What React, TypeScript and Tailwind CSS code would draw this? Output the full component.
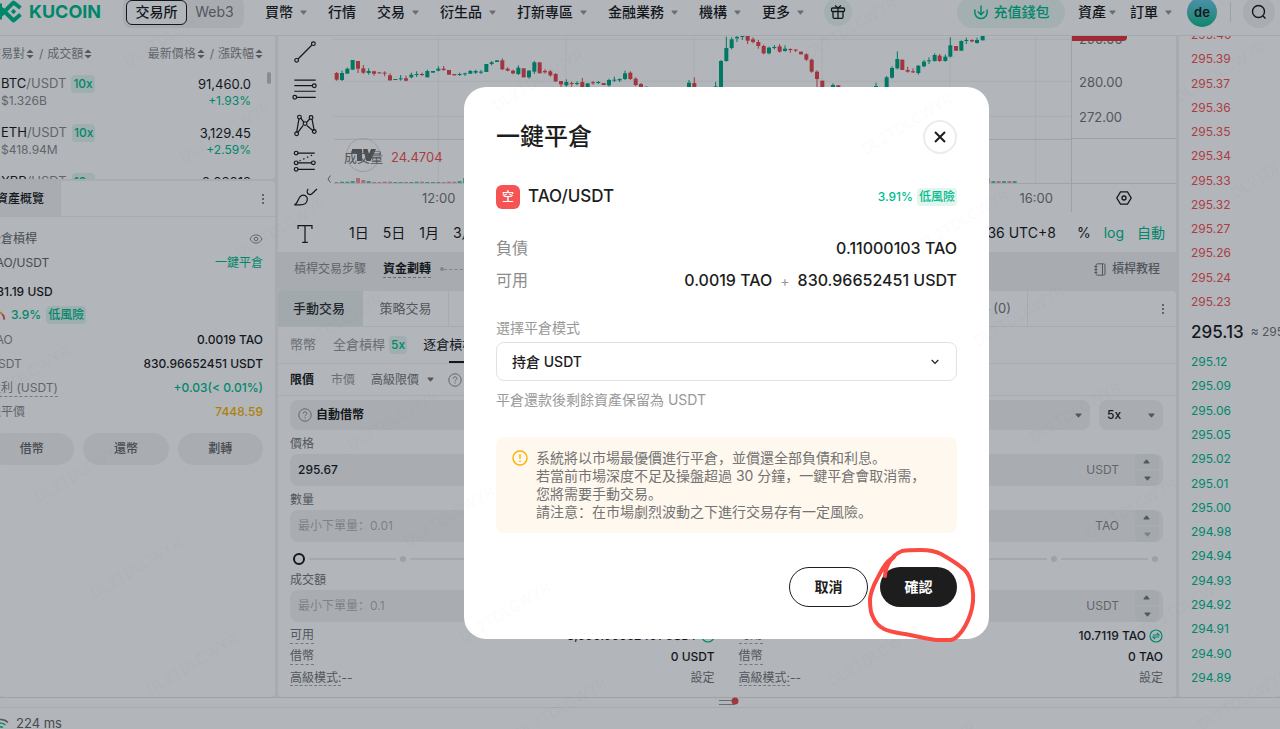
import React from "react";

type Candle = [number, number, number, 0 | 1, number?, number?];

// x, body top, body bottom, rising flag, wick top, wick bottom
const candles: Candle[] = [
  [1010, 219, 239, 0, 216, 242], [1026, 219, 240, 1, 212, 243], [1042, 206, 221, 1, 203, 221], [1058, 180, 209, 1],
  [1074, 183, 206, 0, 183, 219], [1090, 205, 218, 0, 195, 222], [1106, 213, 219, 1, 205, 224], [1122, 214, 221, 0, 212, 227],
  [1138, 217, 220, 0], [1154, 218, 221, 0, 214, 229], [1170, 226, 241, 0, 220, 242], [1186, 237, 240, 1],
  [1202, 235, 238, 1, 225, 242], [1218, 235, 242, 0, 227, 244], [1234, 224, 232, 1, 218, 235], [1250, 222, 225, 1, 214, 231],
  [1266, 222, 225, 0, 218, 228], [1282, 213, 232, 1, 209, 232], [1299, 213, 218, 1], [1315, 206, 212, 1, 199, 214],
  [1331, 206, 210, 0, 198, 212], [1347, 210, 224, 0], [1363, 222, 226, 0], [1379, 222, 225, 1, 218, 228],
  [1395, 220, 223, 1, 218, 228], [1411, 213, 221, 1, 210, 222], [1427, 213, 218, 1, 209, 222], [1443, 215, 218, 1, 210, 222],
  [1459, 192, 216, 1], [1475, 187, 192, 1, 183, 196], [1491, 181, 186, 1], [1507, 181, 208, 0, 175, 210],
  [1523, 206, 212, 0, 202, 214], [1539, 212, 220, 0, 209, 223], [1555, 203, 222, 1, 196, 225], [1571, 205, 232, 0],
  [1587, 212, 232, 1, 210, 236], [1603, 187, 215, 1, 183, 222], [1619, 187, 220, 0], [1635, 213, 217, 0, 208, 221],
  [1651, 214, 226, 0, 210, 230], [1667, 222, 244, 0, 219, 246], [1683, 243, 253, 0, 243, 262], [1699, 246, 256, 1, 238, 260],
  [1715, 249, 252, 0, 245, 260], [1731, 249, 252, 1, 244, 256], [1747, 246, 262, 0, 234, 264], [1763, 250, 262, 1],
  [1779, 247, 250, 0, 243, 254], [1795, 246, 249, 1, 243, 252], [1811, 249, 255, 0], [1827, 240, 256, 1, 236, 260],
  [1843, 239, 242, 1, 230, 246], [1859, 237, 241, 1, 235, 246], [1875, 220, 237, 1, 212, 240], [1891, 218, 237, 0, 214, 240],
  [1907, 236, 255, 0, 232, 258], [1923, 252, 268, 0, 249, 270], [1939, 260, 272, 1], [2067, 248, 265, 1, 240, 265],
  [2083, 249, 265, 0, 232, 265], [2147, 259, 270, 1, 245, 270], [2163, 183, 262, 1, 180, 262], [2179, 144, 183, 1, 110, 185],
  [2195, 118, 144, 1, 112, 148], [2211, 111, 115, 1, 108, 126], [2227, 108, 111, 1, 108, 120], [2243, 108, 122, 0, 108, 132],
  [2259, 118, 126, 0, 112, 130], [2275, 126, 138, 0, 120, 146], [2291, 138, 160, 0, 134, 163], [2307, 143, 160, 1, 140, 163],
  [2323, 141, 144, 1, 135, 148], [2339, 139, 155, 0, 132, 158], [2355, 146, 153, 1, 136, 155], [2371, 147, 150, 0, 145, 158],
  [2387, 149, 152, 0, 147, 156], [2403, 155, 163, 0], [2419, 163, 179, 0, 160, 183], [2435, 179, 215, 0, 176, 218],
  [2451, 215, 237, 0, 211, 262], [2467, 242, 264, 0], [2499, 255, 264, 1, 250, 264], [2515, 256, 264, 0],
  [2628, 258, 264, 1, 248, 264], [2660, 232, 264, 1, 228, 264], [2676, 204, 233, 1, 199, 236], [2692, 177, 205, 1, 154, 208],
  [2707, 179, 210, 0], [2723, 210, 215, 0, 200, 218], [2739, 214, 217, 0, 205, 219], [2755, 197, 219, 1, 195, 224],
  [2772, 185, 199, 1, 180, 202], [2787, 181, 184, 1, 172, 192], [2804, 165, 183, 1, 160, 185], [2819, 167, 183, 0, 162, 186],
  [2836, 170, 183, 1, 163, 185], [2851, 136, 170, 1, 112, 172], [2868, 138, 152, 0], [2884, 123, 152, 1, 121, 153],
  [2899, 120, 123, 1, 113, 132], [2916, 120, 124, 0, 118, 127], [2931, 120, 129, 1, 113, 131], [2948, 108, 121, 1],
];

const volumeHeights = [3, 4, 4, 6, 15, 9, 6, 3, 3, 4, 4, 3, 3, 3, 3, 4, 4, 3, 3, 3];

const asks = ["295.40", "295.39", "295.37", "295.36", "295.35", "295.34", "295.33", "295.32", "295.27", "295.26", "295.24", "295.23"];
const bids = ["295.12", "295.09", "295.06", "295.05", "295.02", "295.01", "295.00", "294.98", "294.94", "294.93", "294.92", "294.91", "294.90", "294.89"];

const Caret = ({ className = "text-[#999]" }: { className?: string }) => (
  <svg viewBox="0 0 8 6" className={`h-[5px] w-[7px] shrink-0 ${className}`} aria-hidden="true">
    <path d="M1.2.5h5.6c.7 0 1 .7.6 1.2L4.6 5a.8.8 0 0 1-1.2 0L.6 1.700C.2 1.200.5.5 1.200.5Z" fill="currentColor" />
  </svg>
);

const Sort = () => (
  <svg viewBox="0 0 8 10" className="mx-px h-[10px] w-2" fill="#7a7a7a" aria-hidden="true">
    <path d="M4 .5 7.600 4H.4zM4 9.500.4 6h7.200z" />
  </svg>
);

const Help = () => (
  <svg viewBox="0 0 14 14" className="h-[14px] w-[14px] shrink-0" fill="none" stroke="#8c8c8c" aria-hidden="true">
    <circle cx="7" cy="7" r="6.200" />
    <path d="M5.200 5.600c0-2.400 3.600-2.300 3.600-.1 0 1.300-1.800 1.400-1.800 2.800M7 9.400v1.200" />
  </svg>
);

const Dots = () => (
  <button aria-label="更多選項" className="flex h-6 w-2 flex-col items-center justify-center gap-[2px]">
    <span className="h-[2px] w-[2px] bg-[#8c8c8c]" />
    <span className="h-[2px] w-[2px] bg-[#8c8c8c]" />
    <span className="h-[2px] w-[2px] bg-[#8c8c8c]" />
  </button>
);

const NavItem = ({ label, caret = true }: { label: string; caret?: boolean }) => (
  <a href="#" className="flex shrink-0 items-center gap-[7px]">
    {label}
    {caret && <Caret />}
  </a>
);

const Header = () => (
  <header className="h-9 overflow-hidden border-b border-[#ececec] bg-white">
    <div className="-mt-3 flex h-12 items-center text-sm font-medium text-[#1d1d1d]">
      <a href="#" className="flex items-center gap-[7px] text-[#01bc8d]" aria-label="KuCoin">
        <svg viewBox="0 0 22 24" className="h-6 w-[22px]" fill="none" stroke="currentColor" strokeWidth="4" strokeLinejoin="round" aria-hidden="true">
          <path d="M0 3.500v16" />
          <path d="M20.500 8 13.500 2.500 4.500 11.500l9 9 7-6" />
          <path d="M1 8.500 4.500 11.500 1 15" />
          <path d="m13.500 8.800 2.700 2.700-2.700 2.700-2.700-2.700z" fill="currentColor" stroke="none" />
        </svg>
        <span className="w-[75px] text-lg font-bold">KUCOIN</span>
      </a>
      <div className="ml-[19px] flex h-[31px] items-center rounded-lg bg-[#f3f3f3] pl-[3px]">
        <button className="h-[25px] w-[61px] rounded-md border border-[#1d1d1d] bg-white">交易所</button>
        <button className="w-[55px] font-normal text-[#777]">Web3</button>
        <span className="w-[2px]" />
      </div>
      <nav className="ml-[21px] flex items-center gap-[21px]">
        <NavItem label="買幣" />
        <NavItem label="行情" caret={false} />
        <NavItem label="交易" />
        <NavItem label="衍生品" />
        <NavItem label="打新專區" />
        <NavItem label="金融業務" />
        <NavItem label="機構" />
        <NavItem label="更多" />
      </nav>
      <button aria-label="獎勵" className="ml-5 flex h-7 w-7 shrink-0 items-center justify-center rounded-full bg-[#eaf5f1]">
        <svg viewBox="0 0 16 16" className="h-4 w-4" fill="none" stroke="#1d1d1d" strokeWidth="1.300" aria-hidden="true">
          <rect x="1.500" y="4" width="13" height="3.500" rx="1" />
          <path d="M3 7.500V13q0 1.300 1.300 1.300h7.400Q13 14.300 13 13V7.500M8 4v10.300M5 1.500 8 4l3-2.500" />
        </svg>
      </button>
      <div className="ml-auto flex items-center">
        <button className="flex h-[31px] w-[108px] items-center justify-center gap-[5px] rounded-full bg-[#eaf5f1] text-[#01bc8d]">
          <svg viewBox="0 0 16 16" className="h-4 w-4" fill="none" stroke="currentColor" strokeWidth="1.400" aria-hidden="true">
            <path d="M8 1.500v9M4.700 7.500 8 10.700l3.300-3.200M2 5.500c-2.500 12 14.500 12 12 0" />
          </svg>
          充值錢包
        </button>
        <a href="#" className="ml-[13px] flex items-center gap-[3px]">資產<Caret /></a>
        <a href="#" className="ml-[14px] flex items-center gap-[7px]">訂單<Caret /></a>
        <button className="ml-[15px] h-[30px] w-[30px] rounded-full bg-linear-to-b from-[#6fc8ee] to-[#01bc8d] text-[13px] font-semibold leading-none">de</button>
        <span className="ml-[13px] h-5 w-px bg-[#e2e2e2]" />
        <button aria-label="搜尋" className="ml-3 mr-[5px] flex h-8 w-8 items-center justify-center rounded-full bg-[#f3f3f3]">
          <svg viewBox="0 0 16 16" className="h-4 w-4" fill="none" stroke="#1d1d1d" strokeWidth="1.400" aria-hidden="true">
            <circle cx="7.500" cy="7.500" r="6" />
            <path d="m12 12 2.500 2.500" />
          </svg>
        </button>
      </div>
    </div>
  </header>
);

const pairs = [
  ["BTC", "$1.326B", "91,460.0", "+1.93%"],
  ["ETH", "$418.94M", "3,129.45", "+2.59%"],
  ["XRP", "$210.35M", "2.03018", "+1.12%"],
];

const Badge = ({ children }: { children: React.ReactNode }) => (
  <span className="rounded-sm bg-[#e4f5ef] px-[2px] text-xs font-medium leading-[18px] text-[#01bc8d]">{children}</span>
);

const PairList = () => (
  <section className="relative h-[143px] overflow-hidden rounded-b bg-white">
    <div className="-ml-3 flex h-8 items-center justify-between pl-px pr-[11px] pt-1 text-xs text-[#8c8c8c]">
      <span className="flex items-center">交易對<Sort /><span className="mx-1">/</span>成交額<Sort /></span>
      <span className="flex items-center">最新價格<Sort /><span className="mx-1">/</span>漲跌幅<Sort /></span>
    </div>
    {pairs.map(([coin, vol, price, change]) => (
      <div key={coin} className="flex h-[49px] justify-between pl-px pr-6 pt-[7px]">
        <div>
          <div className="flex h-[18px] items-center text-[13px] text-[#8c8c8c]">
            <span className="mr-[5px]"><span className="text-[#1d1d1d]">{coin}</span>/USDT</span>
            <Badge>10x</Badge>
          </div>
          <div className="text-xs text-[#8c8c8c]">{vol}</div>
        </div>
        <div className="text-right">
          <div className="h-[18px] text-[13px] leading-[18px] text-[#1d1d1d]">{price}</div>
          <div className="text-xs text-[#01bc8d]">{change}</div>
        </div>
      </div>
    ))}
    <span className="absolute right-1 top-9 h-3 w-1 rounded-full bg-[#c4c4c4]" />
  </section>
);

const AssetRow = ({ label, value, tone = "text-[#1d1d1d]", dashed = false }: { label: string; value: string; tone?: string; dashed?: boolean }) => (
  <div className="flex h-6 items-center justify-between">
    <span className={dashed ? "border-b border-dashed border-[#a8a8a8] text-[#8c8c8c]" : "text-[#8c8c8c]"}>{label}</span>
    <span className={`font-medium ${tone}`}>{value}</span>
  </div>
);

const Assets = () => (
  <section className="flex-1 overflow-hidden rounded bg-white text-xs">
    <div className="flex h-9 items-center justify-between border-b border-[#f0f0f0] pr-2">
      <button className="-ml-4 h-full w-[77px] border-r border-[#ececec] bg-[#f3f3f3] pl-3 pr-4 font-medium text-[#1d1d1d]">
        <span className="whitespace-nowrap">資產概覽</span>
      </button>
      <Dots />
    </div>
    <div className="-ml-3 pl-px pr-3 pt-[10px]">
      <div className="flex h-6 items-center justify-between text-[#666]">
        全倉槓桿
        <svg viewBox="0 0 14 10" className="h-[10px] w-[14px]" fill="none" stroke="#8c8c8c" aria-hidden="true">
          <path d="M1 5c2.500-5.500 9.500-5.500 12 0-2.500 5.500-9.500 5.500-12 0Z" />
          <circle cx="7" cy="5" r="1.800" />
        </svg>
      </div>
      <div className="flex h-6 items-center justify-between text-[#666]">
        TAO/USDT
        <button className="text-[#01bc8d]">一鍵平倉</button>
      </div>
      <div className="mt-[5px] h-6 font-medium leading-6 text-[#1d1d1d]">831.19 USD</div>
      <div className="flex h-[21px] items-center gap-[5px] font-medium text-[#01bc8d]">
        <svg viewBox="0 0 18 12" className="h-3 w-[17px]" fill="none" strokeWidth="2" aria-hidden="true">
          <path d="M2 10A7 7 0 0 1 9 3" stroke="#01bc8d" />
          <path d="M9 3a6 6 0 0 1 5 2" stroke="#f8b200" />
          <path d="M14 5a7 7 0 0 1 2 6" stroke="#f65454" />
        </svg>
        3.9%
        <Badge>低風險</Badge>
      </div>
      <div className="mt-[3px]">
        <AssetRow label="TAO" value="0.0019 TAO" />
        <AssetRow label="USDT" value="830.96652451 USDT" />
        <AssetRow label="盈利 (USDT)" value="+0.03(< 0.01%)" tone="text-[#01bc8d]" dashed />
        <AssetRow label="強平價" value="7448.59" tone="text-[#f8b200]" />
      </div>
      <div className="mt-[9px] grid grid-cols-3 gap-[9px] font-medium text-[#666]">
        {["借幣", "還幣", "劃轉"].map((t) => (
          <button key={t} className="h-8 rounded-full bg-[#f3f3f3]">{t}</button>
        ))}
      </div>
    </div>
  </section>
);

const ChartTools = () => (
  <div className="-mt-[2px] flex w-[53px] flex-col items-center">
    {[
      <g key="a"><path d="m6.500 21.500 15-15" /><circle cx="5" cy="23" r="2" /><circle cx="23" cy="5" r="2" /></g>,
      <g key="b"><path d="M2.500 5.500h23M2.500 11.500h19M2.500 17.500h23M5 24h20.500" /><circle cx="24" cy="11.500" r="2" /><circle cx="3" cy="24" r="2" /></g>,
      <g key="c"><path d="M5 22 7.500 7.500M9.500 6.500l3.500 5M15.500 11.500l4-4.500M21.500 7.500l2.500 12.500M6 22.500l6-8M16 14.500l7 6" /><circle cx="8" cy="5.500" r="2" /><circle cx="20.500" cy="6" r="2" /><circle cx="14" cy="12.500" r="2" /><circle cx="5" cy="23.500" r="2" /><circle cx="24" cy="21" r="2" /></g>,
      <g key="d"><path d="M6 5.500h18.500M6 16h15.500M6 23h18.500" /><path d="m8 14 16-7.500" strokeDasharray="1.500 3" /><circle cx="4.500" cy="5.500" r="2" /><circle cx="4.500" cy="16" r="2" /><circle cx="23" cy="16" r="2" /><circle cx="4.500" cy="23" r="2" /></g>,
      <g key="e"><path d="M2.500 22.500c4-1 3.500-7.500 7.500-10 3-1.500 7 .5 6.500 4.500-.5 4-4 5.500-7.500 5.500ZM17.500 5.500c-2 1.500-1.500 6 2 6 2 0 4-3.500 7.500-6" /></g>,
      <g key="f"><path d="M6.500 8.500V5h15v3.500M14 5v18M11 23h6" /></g>,
    ].map((icon, i) => (
      <button key={i} aria-label="繪圖工具" className="flex w-9 flex-1 items-center justify-center">
        <svg viewBox="0 0 28 28" className="h-[26px] w-[26px]" fill="none" stroke="#1d1d1d" strokeWidth="1.300">{icon}</svg>
      </button>
    ))}
  </div>
);

const Plot = () => (
  <svg viewBox="990 108 2223 444" preserveAspectRatio="none" className="block h-full w-full" aria-label="K線圖">
    {[1315, 1698, 2082, 2466, 2850, 3107].map((x) => <path key={x} d={`M${x} 108V552`} stroke="#f3f3f3" strokeWidth="3" />)}
    {[118, 244, 349].map((y) => <path key={y} d={`M1002 ${y}H3213`} stroke="#f3f3f3" strokeWidth="3" />)}
    <path d="M1002 418H3213" stroke="#e2e2e2" strokeWidth="3" />
    {candles.map(([x, top, bottom, up, high = top, low = bottom]) => (
      <g key={x} fill={up ? "#01a781" : "#e5484d"}>
        <rect x={x - 6} y={top} width="12" height={bottom - top} />
        <rect x={x - 1.5} y={high} width="3" height={low - high} />
      </g>
    ))}
    {candles.map(([x, , , up], i) => {
      const h = x > 2770 ? 6 : volumeHeights[i % 20];
      return x < 2930 && <rect key={x} x={x - 6} y={549 - h} width="12" height={h} fill={up ? "#5cc9ab" : "#f39a9c"} />;
    })}
    {[2963, 2980, 2996, 3012, 3028, 3044].map((x, i) => (
      <rect key={x} x={x - 6} y={i === 0 ? 535 : 543} width="12" height={i === 0 ? 14 : 6} fill={i % 2 ? "#5cc9ab" : "#f39a9c"} />
    ))}
    <path d="M1002 551H3213" stroke="#e2e2e2" strokeWidth="3" />
  </svg>
);

const Chart = () => (
  <section className="flex h-[216px] overflow-hidden bg-white">
    <ChartTools />
    <div className="-ml-px flex min-w-0 flex-1 flex-col">
      <div className="flex h-[148px]">
        <div className="relative min-w-0 flex-1">
          <Plot />
          <svg viewBox="0 0 36 36" className="absolute left-[15px] top-[101px] h-9 w-9" aria-hidden="true">
            <circle cx="18" cy="18" r="16.500" fill="none" stroke="#dcdcdc" />
            <path d="M7 12h10v12h-5v-7H7zM18 12h4.500l1.500 5 2-5h5l-5.500 12h-4z" fill="#6a6a6a" />
          </svg>
          <div className="absolute left-[14px] top-[111px] flex gap-2 text-[13px] leading-5 text-[#777]">
            成交量<span className="text-[#f65454]">24.4704</span>
          </div>
          <svg viewBox="0 0 4 8" className="absolute -left-[3px] top-[139px] h-2 w-1" fill="none" stroke="#777" aria-hidden="true"><path d="M3.500.5 1 4l2.500 3.500" /></svg>
        </div>
        <div className="relative w-[105px] border-b border-l border-[#e2e2e2] pl-[7px] text-[13px] leading-4 text-[#777]">
          <div className="-mt-[5px] h-[43px]">290.00</div>
          <div className="h-[35px]">280.00</div>
          <div className="h-[29px]">272.00</div>
          <div className="-ml-[7px] border-t border-[#e2e2e2]" />
          <span className="absolute left-0 top-0 h-[5px] w-[55px] rounded-br-sm bg-[#e5383f]" />
        </div>
      </div>
      <div className="flex h-7 text-[13px] leading-[29px] text-[#777]">
        <div className="flex flex-1 justify-between pl-[92px] pr-[18px]">
          <span>12:00</span>
          <span>16:00</span>
        </div>
        <div className="flex w-[105px] items-center justify-center border-l border-[#e2e2e2]">
          <svg viewBox="0 0 16 16" className="h-4 w-4" fill="none" stroke="#1d1d1d" strokeWidth="1.300" aria-label="設定">
            <path d="M4.500 1.800h7L15.200 8l-3.700 6.200h-7L.8 8z" />
            <circle cx="8" cy="8" r="2" />
          </svg>
        </div>
      </div>
      <div className="flex h-10 items-center justify-between pl-[19px] pr-[11px] pt-px text-sm text-[#1d1d1d]">
        <div className="flex gap-[14px]">
          {["1日", "5日", "1月", "3月"].map((t) => <button key={t}>{t}</button>)}
        </div>
        <div className="flex gap-[13px]">
          <span className="mr-2">18:32:36 UTC+8</span>
          <button>%</button>
          <button className="text-[#01bc8d]">log</button>
          <button className="text-[#01bc8d]">自動</button>
        </div>
      </div>
    </div>
  </section>
);

const Steps = () => (
  <div className="flex h-[34px] items-center bg-[#f1f1f1] pl-4 pr-4 text-xs text-[#8c8c8c]">
    槓桿交易步驟
    <span className="ml-[17px] border-b border-dashed border-[#999] font-bold text-[#1d1d1d]">資金劃轉</span>
    <span className="ml-[9px] h-1 w-1 rounded-full bg-[#bbb]" />
    <span className="w-10 border-b border-dashed border-[#bbb]" />
    <a href="#" className="ml-auto flex items-center gap-[6px] font-medium text-[#777]">
      <svg viewBox="0 0 12 13" className="h-[13px] w-3" fill="none" stroke="#777" aria-hidden="true">
        <rect x="2" y=".8" width="9" height="11.400" rx="1.500" />
        <path d="M8.500 1v11M.3 3.500h3M.3 6.500h3M.3 9.500h3" />
      </svg>
      槓桿教程
    </a>
  </div>
);

const Stepper = ({ dim = false }: { dim?: boolean }) => (
  <div className="mr-1 flex h-full w-6 flex-col gap-[2px]">
    <button aria-label="增加" className="flex flex-1 rotate-180 items-center justify-center rounded-b-md bg-[#ebecec]"><Caret className="text-[#777]" /></button>
    <button aria-label="減少" className="flex flex-1 items-center justify-center rounded-b-md bg-[#ebecec]"><Caret className={dim ? "text-[#b4b4b4]" : "text-[#777]"} /></button>
  </div>
);

const Field = ({ id, label, unit, value, hint, dim }: { id: string; label: string; unit: string; value?: string; hint?: string; dim?: boolean }) => (
  <div>
    <label htmlFor={id} className="block h-6 text-xs leading-[27px] text-[#777]">{label}</label>
    <div className="flex h-8 items-center overflow-hidden rounded-lg bg-[#f3f3f3]">
      <input id={id} defaultValue={value} placeholder={hint} className="min-w-0 flex-1 bg-transparent pl-2 text-xs font-medium text-[#1d1d1d] outline-none placeholder:font-normal placeholder:text-[#b4b4b4]" />
      <span className="mr-4 text-xs text-[#8c8c8c]">{unit}</span>
      <Stepper dim={dim} />
    </div>
  </div>
);

const Swap = () => (
  <svg viewBox="0 0 14 14" className="ml-[3px] h-[14px] w-[14px]" fill="none" stroke="#01bc8d" strokeWidth="1.200" aria-hidden="true">
    <circle cx="7" cy="7" r="6" />
    <path d="M3.800 6h6.200L7.800 3.800M10.200 8H4l2.200 2.200" />
  </svg>
);

const OrderForm = ({ side, balance, borrow }: { side: string; balance: string; borrow: string }) => (
  <div className="min-w-0 flex-1">
    <Field id={`${side}-price`} label="價格" unit="USDT" value="295.67" />
    <Field id={`${side}-size`} label="數量" unit="TAO" hint="最小下單量：0.01" dim />
    <div className="relative flex h-[26px] items-center justify-between pl-[3px] pr-[5px] pt-[7px]">
      <span className="h-3 w-3 rounded-full border-2 border-[#1d1d1d] bg-white" />
      {[1, 2, 3, 4].map((n) => (
        <React.Fragment key={n}>
          <span className="mx-1 h-[2px] flex-1 bg-[#ececec]" />
          <span className="h-[6px] w-[6px] rounded-full bg-[#e0e2e2]" />
        </React.Fragment>
      ))}
      <input type="range" aria-label="數量比例" defaultValue={0} className="absolute inset-x-0 top-2 h-4 opacity-0" />
    </div>
    <div className="-mt-[2px]">
      <Field id={`${side}-amount`} label="成交額" unit="USDT" hint="最小下單量：0.1" />
    </div>
    <div className="mt-[3px] text-xs text-[#777]">
      <div className="flex h-[21px] items-center justify-between">
        <span className="border-b border-dashed border-[#a8a8a8]">可用</span>
        <span className="flex items-center font-medium text-[#1d1d1d]">{balance}<Swap /></span>
      </div>
      <div className="flex h-[21px] items-center justify-between">
        <span className="border-b border-dashed border-[#a8a8a8]">借幣</span>
        <span className="font-medium text-[#1d1d1d]">{borrow}</span>
      </div>
      <div className="flex h-[21px] items-center justify-between">
        <span><span className="border-b border-dashed border-[#a8a8a8]">高級模式:</span>--</span>
        <button>設定</button>
      </div>
    </div>
  </div>
);

const Trade = () => (
  <section className="mt-[5px] flex-1 overflow-hidden rounded bg-white">
    <div className="flex h-9 items-stretch border-b border-[#f0f0f0] text-[13px] text-[#777]">
      <button className="w-[85px] bg-[#e9ecea] pr-[3px] font-medium text-[#333]">手動交易</button>
      <button className="w-[86px] border-r border-[#f0f0f0]">策略交易</button>
      <button className="ml-auto border-r border-[#f0f0f0] pr-4">策略 (0)</button>
      <div className="flex w-[148px] items-center justify-end pr-[9px]"><Dots /></div>
    </div>
    <div className="flex h-[37px] items-center border-b border-[#f0f0f0] pl-3 text-[13px] text-[#999]">
      <button>幣幣</button>
      <button className="ml-[17px] mr-1">全倉槓桿</button>
      <Badge>5x</Badge>
      <button className="relative ml-4 text-[#1d1d1d]">
        逐倉槓桿
        <span className="absolute -bottom-2 left-1/2 h-[2px] w-6 bg-[#1d1d1d]" />
      </button>
    </div>
    <div className="flex h-8 items-center border-b border-[#f0f0f0] pl-3 text-xs text-[#999]">
      <button className="font-bold text-[#1d1d1d]">限價</button>
      <button className="ml-[17px]">市價</button>
      <button className="ml-4 mr-[14px] flex items-center gap-2 text-[#777]">高級限價<Caret className="text-[#777]" /></button>
      <Help />
    </div>
    <div className="px-3 pt-1">
      <div className="flex gap-[9px] pr-px text-xs font-medium text-[#1d1d1d]">
        <div className="flex h-[30px] flex-1 items-center gap-1 rounded-lg bg-[#f3f3f3] px-2">
          <Help />
          <select aria-label="借幣方式" className="flex-1 appearance-none bg-transparent font-bold outline-none"><option>自動借幣</option></select>
          <Caret className="text-[#777]" />
        </div>
        <div className="flex h-[30px] w-16 items-center rounded-lg bg-[#f3f3f3] px-2">
          <select aria-label="槓桿倍數" className="min-w-0 flex-1 appearance-none bg-transparent outline-none"><option>5x</option></select>
          <Caret className="text-[#777]" />
        </div>
      </div>
      <div className="flex gap-6 pr-px">
        <OrderForm side="buy" balance="3,990.96652451 USDT" borrow="0 USDT" />
        <OrderForm side="sell" balance="10.7119 TAO" borrow="0 TAO" />
      </div>
    </div>
  </section>
);

const OrderBook = () => (
  <aside className="flex w-[101px] shrink-0 flex-col overflow-hidden rounded-b bg-white pl-3 text-xs">
    <div className="flex h-[278px] shrink-0 flex-col justify-end overflow-hidden text-[#f65454]">
      <div className="flex h-[291px] shrink-0 flex-col">
        {asks.map((p) => <div key={p} className="flex flex-1 items-center">{p}</div>)}
      </div>
    </div>
    <div className="flex h-9 items-center gap-[7px] whitespace-nowrap text-[#777]">
      <span className="text-[17px] font-medium text-[#1d1d1d]">295.13</span>≈ 295.13
    </div>
    <div className="mb-[7px] flex flex-1 flex-col text-[#01bc8d]">
      {bids.map((p) => <div key={p} className="flex flex-1 items-center">{p}</div>)}
    </div>
  </aside>
);

const Footer = () => (
  <footer className="h-8 border-t border-[#e2e2e2] bg-white text-[13px] text-[#666]">
    <div className="relative flex h-[10px] justify-center border-b border-[#f0f0f0] pl-[177px]">
      <svg viewBox="0 0 20 9" className="-mt-px h-[9px] w-5" aria-hidden="true">
        <path d="M0 3.500h16M0 7.500h16" stroke="#999" />
        <circle cx="16" cy="4" r="3.500" fill="#e5484d" />
      </svg>
    </div>
    <div className="flex h-[21px] items-center gap-[7px] pt-[10px]">
      <svg viewBox="0 0 16 12" className="-ml-[7px] h-3 w-4" fill="none" strokeWidth="1.400" aria-hidden="true">
        <path d="M1 4.500c4-4 10-4 14 0" stroke="#777" />
        <path d="M3.500 7c3-2.500 6-2.500 9 0M6 9.500c1.500-1 2.500-1 4 0" stroke="#01bc8d" />
      </svg>
      224 ms
    </div>
  </footer>
);

const CloseDialog = () => (
  <div className="fixed inset-0 flex items-start justify-center bg-[#000d1d]/30 pl-[173px] pt-[87px]">
    <div role="dialog" aria-labelledby="dialog-title" className="relative w-[525px] rounded-[22px] bg-white px-8 py-8 text-[#1d1d1d]">
      <div className="flex items-center justify-between">
        <h2 id="dialog-title" className="text-2xl font-medium leading-[36px]">一鍵平倉</h2>
        <button aria-label="關閉" className="flex h-[34px] w-[34px] items-center justify-center rounded-full border-2 border-[#ececec]">
          <svg viewBox="0 0 12 12" className="h-3 w-3" stroke="#1d1d1d" strokeWidth="2" aria-hidden="true"><path d="m1 1 10 10M11 1 1 11" /></svg>
        </button>
      </div>
      <div className="mt-[30px] flex h-6 items-center">
        <span className="flex h-6 w-6 items-center justify-center rounded-md bg-[#f65454] text-xs font-medium text-white">空</span>
        <span className="ml-2 text-[17px] font-medium">TAO/USDT</span>
        <span className="ml-auto mr-1 text-xs font-medium text-[#01bc8d]">3.91%</span>
        <Badge>低風險</Badge>
      </div>
      <dl className="mt-[27px] flex flex-col gap-2 text-base font-medium leading-6">
        <div className="flex justify-between">
          <dt className="font-normal text-[#8c8c8c]">負債</dt>
          <dd>0.11000103 TAO</dd>
        </div>
        <div className="flex justify-between">
          <dt className="font-normal text-[#8c8c8c]">可用</dt>
          <dd>0.0019 TAO<span className="mx-2 text-sm font-normal text-[#999]">+</span>830.96652451 USDT</dd>
        </div>
      </dl>
      <label htmlFor="close-mode" className="mt-[26px] block text-sm text-[#999]">選擇平倉模式</label>
      <div className="mt-1 flex h-[39px] items-center rounded-lg border border-[#e2e2e2] pl-[15px] pr-[17px]">
        <select id="close-mode" className="flex-1 appearance-none bg-transparent text-sm font-medium outline-none"><option>持倉 USDT</option></select>
        <svg viewBox="0 0 8 6" className="h-[6px] w-2" fill="none" stroke="#1d1d1d" strokeWidth="1.200" aria-hidden="true"><path d="m.7 1 3.300 3.300L7.300 1" /></svg>
      </div>
      <p className="mt-[9px] text-sm text-[#999]">平倉還款後剩餘資產保留為 USDT</p>
      <div className="mt-[27px] flex gap-2 rounded-lg bg-[#fff8ee] px-4 py-3 text-sm leading-[18px] text-[#737373]">
        <svg viewBox="0 0 16 16" className="mt-px h-4 w-4 shrink-0" fill="none" stroke="#f8b200" strokeWidth="1.400" aria-hidden="true">
          <circle cx="8" cy="8" r="7" />
          <path d="M8 4v5M8 10.500V12" />
        </svg>
        <p>
          系統將以市場最優價進行平倉，並償還全部負債和利息。<br />
          若當前市場深度不足及操盤超過 30 分鐘，一鍵平倉會取消需，<br />
          您將需要手動交易。<br />
          請注意：在市場劇烈波動之下進行交易存有一定風險。
        </p>
      </div>
      <div className="mt-[34px] flex justify-end gap-3 text-sm font-bold">
        <button className="h-10 w-[79px] rounded-full border border-[#1d1d1d]">取消</button>
        <button className="h-10 w-[77px] rounded-full bg-[#1d1d1d] text-white">確認</button>
      </div>
      <svg viewBox="0 0 112 100" className="pointer-events-none absolute -bottom-[6px] right-[10px] h-[100px] w-[112px]" fill="none" stroke="#fa4a42" strokeWidth="4" strokeLinecap="round" strokeLinejoin="round" aria-hidden="true">
        <path d="M18 31c0-8 4-15 9-19C23 14 19 18 16 23 13 28 9 36 7 40 5 45 3 50 3 55c0 6 0 12 3 17 2 5 5 9 11 12 8 4 17 4 26 6 9 2 18 4 26 5h14c5 0 9-5 12-9 5-7 8-14 10-23 2-9 1-19-1-26-2-7-5-12-10-15-6-5-13-9-20-13C68 6 62 5 54 5 46 5 41 5 35 6c-5 2-9 5-12 10-3 5-5 9-5 15" />
      </svg>
    </div>
  </div>
);

const marks = Array.from({ length: 6 }, (_, j) => j - 1).flatMap((j) =>
  Array.from({ length: 14 }, (_, i) => i - 5).map((i) => ({ x: 224 + i * 56 + j * 313, y: 133 + i * 96 - j * 52 }))
).filter(({ x, y }) => x > -40 && y > -20);

const Watermark = () => (
  <div aria-hidden="true" className="pointer-events-none fixed inset-0 overflow-hidden text-[15px] leading-5 text-black/2">
    {marks.map(({ x, y }) => (
      <span key={`${x}-${y}`} className="absolute w-[100px] -translate-x-1/2 -translate-y-1/2 -rotate-31 text-center" style={{ left: x, top: y }}>DL2TDLCWYR</span>
    ))}
  </div>
);

export default function App() {
  return (
    <div className="flex min-h-screen flex-col overflow-hidden bg-[#f1f1f1] font-['Inter','Noto_Sans_CJK_SC',sans-serif]">
      <Header />
      <main className="flex flex-1 gap-[3px]">
        <div className="flex w-[275px] shrink-0 flex-col gap-[2px]">
          <PairList />
          <Assets />
        </div>
        <div className="flex min-w-0 flex-1 flex-col">
          <Chart />
          <Steps />
          <Trade />
        </div>
        <OrderBook />
      </main>
      <Footer />
      <CloseDialog />
      <Watermark />
    </div>
  );
}
